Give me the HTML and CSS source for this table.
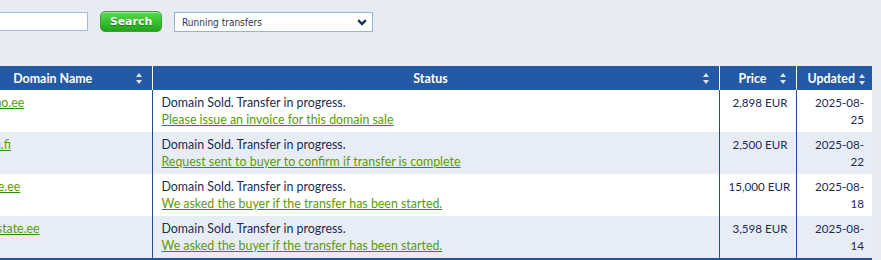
FILE: index.html
```html
<!DOCTYPE html>
<html>
<head>
<meta charset="utf-8">
<link rel="stylesheet" href="styles.css">
</head>
<body>
<div class="page">
  <div class="toolbar">
    <input class="query" type="text">
    <button class="search-btn">Search</button>
    <div class="select">
      <span>Running transfers</span>
      <svg class="chev" width="10" height="7" viewBox="0 0 10 7"><path d="M1.2 1.2 L5 5 L8.8 1.2" fill="none" stroke="#1b2f5e" stroke-width="2.4"/></svg>
    </div>
  </div>
  <table class="grid">
    <colgroup>
      <col class="c-domain"><col class="c-status"><col class="c-price"><col class="c-updated">
    </colgroup>
    <thead>
      <tr>
        <th class="h-domain"><span class="hl">Domain Name</span><span class="sort"></span></th>
        <th class="h-status"><span class="hl">Status</span><span class="sort"></span></th>
        <th class="h-price"><span class="hl">Price</span><span class="sort"></span></th>
        <th class="h-updated"><span class="hl">Updated</span><span class="sort inline"></span></th>
      </tr>
    </thead>
    <tbody>
      <tr>
        <td><a href="#">casino.ee</a></td>
        <td>Domain Sold. Transfer in progress.<br><a href="#">Please issue an invoice for this domain sale</a></td>
        <td class="num">2,898 EUR</td>
        <td class="num">2025-08-25</td>
      </tr>
      <tr class="alt">
        <td><a href="#">kodu.fi</a></td>
        <td>Domain Sold. Transfer in progress.<br><a href="#">Request sent to buyer to confirm if transfer is complete</a></td>
        <td class="num">2,500 EUR</td>
        <td class="num">2025-08-22</td>
      </tr>
      <tr>
        <td><a href="#">hinde.ee</a></td>
        <td>Domain Sold. Transfer in progress.<br><a href="#">We asked the buyer if the transfer has been started.</a></td>
        <td class="num">15,000 EUR</td>
        <td class="num">2025-08-18</td>
      </tr>
      <tr class="alt">
        <td><a href="#">myestate.ee</a></td>
        <td>Domain Sold. Transfer in progress.<br><a href="#">We asked the buyer if the transfer has been started.</a></td>
        <td class="num">3,598 EUR</td>
        <td class="num">2025-08-14</td>
      </tr>
    </tbody>
  </table>
</div>
</body>
</html>
```
FILE: styles.css
```css
html, body {
  margin: 0;
  padding: 0;
  background: #e8ecf2;
  overflow: hidden;
}
.page {
  margin-left: -36px;
  padding-top: 11px;
  font-family: "Lato", "Liberation Sans", sans-serif;
  font-size: 12.4px;
  color: #1c2a52;
}
.toolbar {
  display: flex;
  align-items: flex-start;
  gap: 12px;
  height: 55px;
}
.query {
  box-sizing: border-box;
  width: 124px;
  height: 19px;
  margin: 1px 0 0;
  border: 1px solid #9dbce2;
  background: #fff;
  padding: 0;
}
.search-btn {
  box-sizing: border-box;
  width: 62px;
  height: 21px;
  padding: 0;
  border: 1px solid #3f9f35;
  border-radius: 5px;
  background: linear-gradient(#56dc4f 0%, #3cc534 45%, #22a31a 100%);
  color: #fff;
  font-family: "DejaVu Sans", Verdana, sans-serif;
  font-weight: bold;
  font-size: 11px;
  text-shadow: 0 1px 1px #1d6f16;
  box-shadow: inset 0 1px 0 rgba(255,255,255,0.4);
}
.select {
  box-sizing: border-box;
  width: 199px;
  height: 20px;
  margin-top: 1px;
  border: 1px solid #92b3da;
  background: #fff;
  display: flex;
  align-items: center;
  justify-content: space-between;
  padding: 0 5px 0 7px;
  font-family: "DejaVu Sans Condensed", "DejaVu Sans", sans-serif;
  font-size: 10px;
  color: #2a3559;
}
.grid {
  border-collapse: collapse;
  table-layout: fixed;
  width: 908px;
  border-bottom: 2px solid #2255a0;
}
.c-domain { width: 188px; }
.c-status { width: 567px; }
.c-price { width: 77px; }
.c-updated { width: 76px; }
.grid th {
  background: #2359a5;
  color: #fff;
  font-weight: bold;
  font-size: 12.4px;
  height: 24px;
  padding: 0 18px 0 8px;
  text-align: center;
  position: relative;
  border-left: 1px solid #ffffff;
}
.grid th:first-child { border-left: none; }
.grid th.h-updated {
  padding: 0 6px 0 4px;
  text-align: right;
}
.sort {
  position: absolute;
  right: 9px;
  top: 7px;
  width: 7px;
  height: 11px;
}
.sort::before, .sort::after {
  content: "";
  position: absolute;
  left: 0;
  border-left: 3.5px solid transparent;
  border-right: 3.5px solid transparent;
}
.sort::before { top: 0; border-bottom: 4px solid #dbe4f2; }
.sort::after { bottom: 0; border-top: 4px solid #dbe4f2; }
.sort.inline {
  position: relative;
  display: inline-block;
  right: auto;
  top: 2px;
  margin-left: 4px;
}
.grid td {
  vertical-align: top;
  padding: 4px 8px 4px 9px;
  line-height: 17px;
  background: #fff;
  border-left: 1px solid #1f4f9c;
  height: 33px;
  box-sizing: content-box;
}
.grid td:first-child { border-left: none; padding-left: 10px; }
.grid tr.alt td { background: #e8edf5; }
.grid td.num {
  text-align: right;
  padding-right: 8px;
  font-size: 11.6px;
}
.grid td.num:nth-child(3) { white-space: nowrap; }
.grid a {
  color: #5c9a0c;
  text-decoration: underline;
  text-decoration-color: #2e8f10;
}
```
